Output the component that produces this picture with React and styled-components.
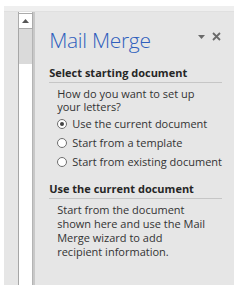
import styled, {createGlobalStyle} from "styled-components";

const GlobalStyle = createGlobalStyle`
  html, body {
    margin: 0;
    padding: 0;
    background: #ffffff;
  }
  body {
    font-family: "Open Sans", "Noto Sans", sans-serif;
  }
`;

const Frame = styled.div`
  margin: 6px 0 0 4px;
  width: 230px;
  height: 279px;
  background: #e6e6e6;
  display: flex;
  flex-direction: column;
`;

const TopBand = styled.div`
  height: 5px;
  background: #efefef;
  border-bottom: 1px solid #e0e0e0;
`;

const Body = styled.div`
  flex: 1;
  display: flex;
  flex-direction: row;
  min-height: 0;
`;

const Gutter = styled.div`
  width: 16px;
`;

const ScrollBar = styled.div`
  width: 13px;
  border-left: 1px solid #a6a6a6;
  border-right: 1px solid #b4b4b4;
  background: #ffffff;
  display: flex;
  flex-direction: column;
`;

const ScrollButton = styled.div`
  height: 16px;
  margin: 1px 0 0 -1px;
  width: 15px;
  box-sizing: border-box;
  border: 1px solid #ababab;
  background: #ffffff;
  display: flex;
  align-items: center;
  justify-content: center;
`;

const ScrollThumb = styled.div`
  height: 35px;
  background: #dadada;
`;

const Panel = styled.div`
  flex: 1;
  border-left: 2px solid #c8c8c8;
  padding: 0 12px 0 14px;
  color: #262626;
`;

const TitleRow = styled.div`
  display: flex;
  align-items: center;
  justify-content: space-between;
  margin-top: 13px;
  height: 30px;
`;

const Title = styled.div`
  font-family: "Open Sans", "Noto Sans", sans-serif;
  font-weight: 300;
  font-size: 21px;
  color: #2f5fbd;
  letter-spacing: -0.3px;
`;

const Controls = styled.div`
  display: flex;
  align-items: center;
  gap: 7px;
  margin-right: 1px;
  margin-top: -7px;
`;

const SectionHead = styled.div`
  margin-top: ${(props) => props.top || 0}px;
  font-size: 11px;
  font-weight: 700;
  line-height: 15px;
  padding-bottom: 2px;
  border-bottom: 1px solid #c6c6c6;
`;

const Text = styled.div`
  margin: ${(props) => props.top || 4}px 12px 0 8px;
  font-size: 11px;
  line-height: ${(props) => props.lh || 14}px;
  color: #333333;
`;

const RadioList = styled.div`
  margin: 4px 0 0 8px;
  display: flex;
  flex-direction: column;
  gap: 5px;
  white-space: nowrap;
`;

const RadioRow = styled.label`
  display: flex;
  align-items: center;
  gap: 5px;
  font-size: 11px;
  line-height: 14px;
  color: #333333;
`;

const Circle = styled.span`
  flex: none;
  width: 10px;
  height: 10px;
  box-sizing: border-box;
  border-radius: 50%;
  border: 1px solid #6e6e6e;
  background: #ffffff;
  display: flex;
  align-items: center;
  justify-content: center;

  &::after {
    content: "";
    width: 4px;
    height: 4px;
    border-radius: 50%;
    background: ${(props) => (props.checked ? "#444444" : "transparent")};
  }
`;

function Radio({checked, children}) {
    return (
        <RadioRow>
            <Circle checked={checked}/>
            {children}
        </RadioRow>
    );
}

export default function App() {
    return (
        <>
            <GlobalStyle/>
            <Frame>
                <TopBand/>
                <Body>
                    <Gutter/>
                    <ScrollBar>
                        <ScrollButton>
                            <svg width="7" height="4" viewBox="0 0 7 4">
                                <path d="M0 4 L3.5 0 L7 4 Z" fill="#555"/>
                            </svg>
                        </ScrollButton>
                        <ScrollThumb/>
                    </ScrollBar>
                    <Panel>
                        <TitleRow>
                            <Title>Mail Merge</Title>
                            <Controls>
                                <svg width="7" height="4" viewBox="0 0 7 4">
                                    <path d="M0 0 L7 0 L3.5 4 Z" fill="#6a6a6a"/>
                                </svg>
                                <svg width="9" height="9" viewBox="0 0 9 9">
                                    <path d="M1 1 L8 8 M8 1 L1 8" stroke="#6a6a6a" strokeWidth="1.8"/>
                                </svg>
                            </Controls>
                        </TitleRow>
                        <SectionHead top={10}>Select starting document</SectionHead>
                        <Text lh={13}>How do you want to set up your letters?</Text>
                        <RadioList>
                            <Radio checked>Use the current document</Radio>
                            <Radio>Start from a template</Radio>
                            <Radio>Start from existing document</Radio>
                        </RadioList>
                        <SectionHead top={12}>Use the current document</SectionHead>
                        <Text top={4}>Start from the document shown here and use the Mail Merge wizard to add recipient information.</Text>
                    </Panel>
                </Body>
            </Frame>
        </>
    );
}
